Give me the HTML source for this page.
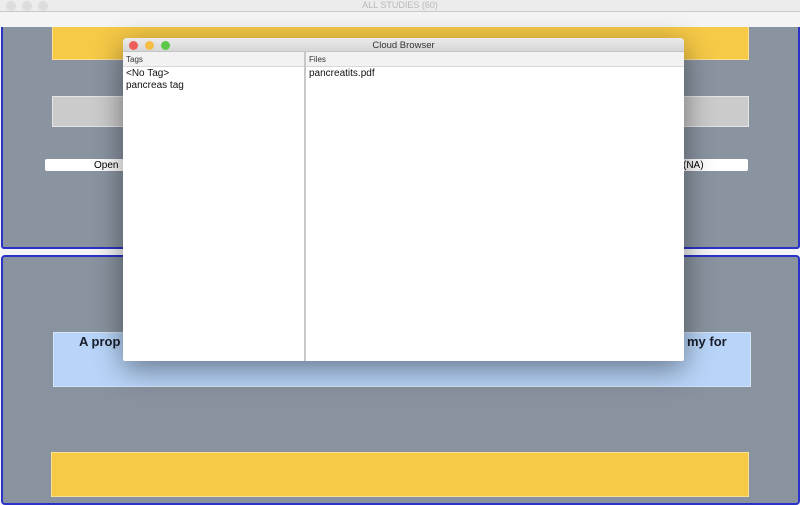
<!DOCTYPE html>
<html><head><style>
*{margin:0;padding:0;box-sizing:border-box}
body{width:800px;height:500px;overflow:hidden;position:relative;background:#f4f4f4;font-family:"Liberation Sans",sans-serif}
.a{position:absolute}
.dot{position:absolute;width:10px;height:10px;border-radius:50%}
</style></head><body>
<div class="a" style="left:0;top:0;width:800px;height:12px;background:#ececec;border-bottom:1px solid #c8c8c8"></div>
<div class="dot" style="left:6px;top:1px;background:#dcdcdc"></div>
<div class="dot" style="left:22px;top:1px;background:#dcdcdc"></div>
<div class="dot" style="left:38px;top:1px;background:#dcdcdc"></div>
<div class="a" style="left:0;top:0;width:800px;text-align:center;font-size:9px;color:#b8b8b8;line-height:11px">ALL STUDIES (60)</div>
<div class="a" style="left:1px;top:27px;width:799px;height:222px;background:#8a94a1;border:2px solid #2a32c8;border-top:none;border-radius:0 0 3px 3px"></div>
<div class="a" style="left:52px;top:27px;width:697px;height:33px;background:#f6c946;border:1px solid #f9df9a;border-top:none"></div>
<div class="a" style="left:52px;top:96px;width:697px;height:31px;background:#cbcbcb;border:1px solid #e6e6e6"></div>
<div class="a" style="left:45px;top:159px;width:80px;height:12px;background:#fff;border-radius:2px;font-size:10px;line-height:13px;padding-left:49px">Open</div>
<div class="a" style="left:680px;top:159px;width:68px;height:12px;background:#fff;border-radius:2px;font-size:10px;line-height:13px;padding-left:3px">(NA)</div>
<div class="a" style="left:1px;top:255px;width:799px;height:250px;background:#89939f;border:2px solid #2a32c8;border-radius:4px"></div>
<div class="a" style="left:53px;top:332px;width:698px;height:55px;background:#b8d5f9;border:1px solid #d6e4f7;font-weight:bold;font-size:13px;color:#1a1e2a;padding:1px 0 0 25px">A prop<span style="position:absolute;left:633px;top:1px">my for</span></div>
<div class="a" style="left:51px;top:452px;width:698px;height:45px;background:#f6c946;border:1px solid #f9df9a"></div>
<!-- dialog -->
<div class="a" style="left:123px;top:38px;width:561px;height:323px;background:#fff;border-radius:4px 4px 2px 2px;box-shadow:0 8px 30px rgba(0,0,0,.45);overflow:hidden">
 <div class="a" style="left:0;top:0;width:561px;height:14px;background:linear-gradient(#ebebeb,#d6d6d6);border-bottom:1px solid #c4c4c4;font-size:9.5px;text-align:center;line-height:15px;color:#333">Cloud Browser</div>
 <div class="dot" style="left:6px;top:3px;width:9px;height:9px;background:#ee5f58"></div>
 <div class="dot" style="left:22px;top:3px;width:9px;height:9px;background:#f7bd45"></div>
 <div class="dot" style="left:38px;top:3px;width:9px;height:9px;background:#5cc84a"></div>
 <div class="a" style="left:0;top:14px;width:561px;height:15px;background:#f2f2f2;border-bottom:1px solid #d8d8d8;font-size:8px;line-height:15px;color:#333"><span style="position:absolute;left:3px">Tags</span><span style="position:absolute;left:186px">Files</span></div>
 <div class="a" style="left:181px;top:14px;width:2px;height:310px;background:#c8c8c8"></div>
 <div class="a" style="left:3px;top:30px;font-size:10px;line-height:12px;color:#111">&lt;No Tag&gt;<br>pancreas tag</div>
 <div class="a" style="left:186px;top:30px;font-size:10px;line-height:12px;color:#111">pancreatits.pdf</div>
</div>
</body></html>
